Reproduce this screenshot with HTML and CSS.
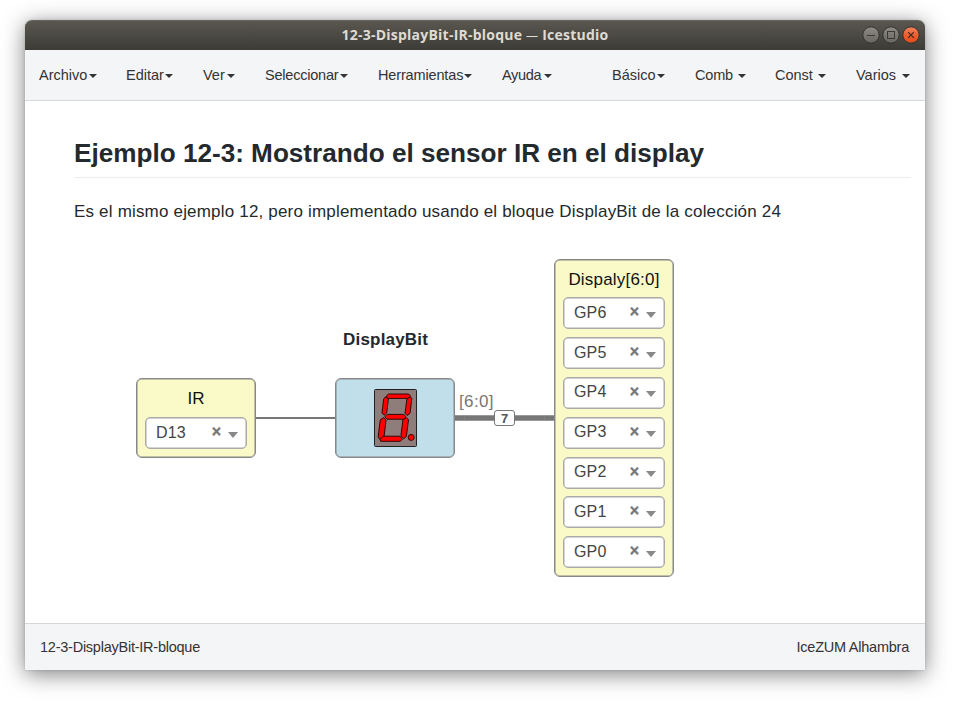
FILE: index.html
```html
<!DOCTYPE html>
<html lang="es">
<head>
<meta charset="utf-8">
<title>12-3-DisplayBit-IR-bloque — Icestudio</title>
<link rel="stylesheet" href="styles.css">
</head>
<body>
<div class="window">
  <header class="titlebar">
    <span class="title">12-3-DisplayBit-IR-bloque <span class="dash">—</span> Icestudio</span>
    <svg class="controls" width="60" height="20" viewBox="0 0 60 20">
      <defs>
        <linearGradient id="gray" x1="0" y1="0" x2="0" y2="1"><stop offset="0" stop-color="#8d8b84"/><stop offset="1" stop-color="#686660"/></linearGradient>
        <linearGradient id="orange" x1="0" y1="0" x2="0" y2="1"><stop offset="0" stop-color="#f58462"/><stop offset="0.5" stop-color="#ec5f30"/><stop offset="1" stop-color="#df4c19"/></linearGradient>
      </defs>
      <circle cx="10" cy="10" r="8.2" fill="url(#gray)" stroke="#33322e"/>
      <circle cx="30" cy="10" r="8.2" fill="url(#gray)" stroke="#33322e"/>
      <circle cx="50" cy="10" r="8.2" fill="url(#orange)" stroke="#33322e"/>
      <path d="M6 10.5h8" stroke="#3b3a35" fill="none"/>
      <rect x="26.5" y="6.5" width="7" height="7" stroke="#3b3a35" fill="none"/>
      <path d="M47.2 7.2l5.6 5.6M52.8 7.2l-5.6 5.6" stroke="#3b2a20" stroke-width="1.2" fill="none"/>
    </svg>
  </header>
  <nav class="menubar">
    <ul class="menu">
      <li class="w-archivo">Archivo<i class="caret"></i></li>
      <li class="w-editar">Editar<i class="caret"></i></li>
      <li class="w-ver">Ver<i class="caret"></i></li>
      <li class="w-sel">Seleccionar<i class="caret"></i></li>
      <li class="w-herr">Herramientas<i class="caret"></i></li>
      <li class="w-ayuda">Ayuda<i class="caret"></i></li>
    </ul>
    <ul class="menu">
      <li class="w-basico">Básico<i class="caret"></i></li>
      <li class="w-comb">Comb<i class="caret"></i></li>
      <li class="w-const">Const<i class="caret"></i></li>
      <li class="w-varios">Varios<i class="caret"></i></li>
    </ul>
  </nav>
  <main class="canvas">
    <article class="note">
      <h1>Ejemplo 12-3: Mostrando el sensor IR en el display</h1>
      <p>Es el mismo ejemplo 12, pero implementado usando el bloque DisplayBit de la colección 24</p>
    </article>
    <svg class="wires" width="900" height="522" viewBox="25 101 900 522">
      <path d="M255 418H336" stroke="#777" stroke-width="2"/>
      <path d="M454 418H555" stroke="#777" stroke-width="5.4"/>
      <path d="M464.5 415v6M544.5 415v6" stroke="#8a8a8a" stroke-width=".6"/>
    </svg>
    <span class="bus-size">7</span>
    <span class="port-label">[6:0]</span>
    <strong class="block-label">DisplayBit</strong>
    <section class="node input">
      <h2>IR</h2>
      <div class="select"><span>D13</span><b>×</b><i></i></div>
    </section>
    <section class="node generic">
      <svg width="43" height="58" viewBox="0 0 43 58">
        <rect x=".5" y=".5" width="42" height="57" rx="1" fill="#8e7d7b" stroke="#222"/>
        <g fill="#f00" stroke="#200" stroke-width=".9" stroke-linejoin="round">
          <path d="M12.3 7l2.2-2h20.2l1.8 2-2.2 2.4H14.1z"/>
          <path d="M11.4 7.8l3 2.2-1.7 14-2.6 2.3-2.2-2.3 1.8-14z"/>
          <path d="M36.4 7.8l1.4 1.7-1.8 14.8-2.9 2.2-2.1-2.3 1.9-14.2z"/>
          <path d="M10.8 27.8l2.4-2.4h16.6l2.2 2.4-2.4 2.4H13z"/>
          <path d="M9.6 28.6l2.5 2.3-2 16.3-4.1 3.4-1.9-2.6 2.2-17.2z"/>
          <path d="M32.4 28.6l2.1 2.2-2.1 16.6-2.9 2.4-2.6-2.7 2-16.2z"/>
          <path d="M6 50.4l3.1-3.2h16.7l2.6 3.1-2 2H6.7z"/>
          <circle cx="37.2" cy="48.4" r="3"/>
        </g>
      </svg>
    </section>
    <section class="node output">
      <h2>Dispaly[6:0]</h2>
      <div class="select"><span>GP6</span><b>×</b><i></i></div>
      <div class="select"><span>GP5</span><b>×</b><i></i></div>
      <div class="select"><span>GP4</span><b>×</b><i></i></div>
      <div class="select"><span>GP3</span><b>×</b><i></i></div>
      <div class="select"><span>GP2</span><b>×</b><i></i></div>
      <div class="select"><span>GP1</span><b>×</b><i></i></div>
      <div class="select"><span>GP0</span><b>×</b><i></i></div>
    </section>
  </main>
  <footer class="statusbar">
    <span>12-3-DisplayBit-IR-bloque</span>
    <span class="board">IceZUM Alhambra</span>
  </footer>
</div>
</body>
</html>
```
FILE: styles.css
```css
* { box-sizing: border-box; }
body {
  margin: 0;
  padding: 20px 35px 45px 25px;
  height: 715px;
  overflow: hidden;
  background: #fff;
  color: #24292e;
  font-family: "Liberation Sans", Arial, sans-serif;
}
.window {
  display: flex;
  flex-direction: column;
  width: 900px;
  height: 650px;
  border-radius: 7px 7px 0 0;
  background: #fff;
  box-shadow: 0 4px 22px rgba(0, 0, 0, .5), 0 0 3px rgba(0, 0, 0, .15);
}
.titlebar {
  position: relative;
  display: flex;
  align-items: center;
  justify-content: center;
  height: 30px;
  padding-bottom: 1px;
  border-radius: 7px 7px 0 0;
  border-top: 1px solid #66655c;
  background: linear-gradient(#59574f, #3d3b37);
}
.title {
  color: #dfdbd2;
  font: bold 14px/26px "Open Sans", "Noto Sans", sans-serif;
  letter-spacing: .23px;
  white-space: nowrap;
}
.dash { font-weight: 400; font-size: 12px; }
.controls { position: absolute; right: 4px; top: 4px; }
.menubar {
  display: flex;
  justify-content: space-between;
  height: 51px;
  padding: 0 15px 0 14px;
  background: #f4f5f7;
  border-bottom: 1px solid #d3dadd;
  color: #333;
  font-size: 14.5px;
  line-height: 50px;
}
.menu { display: flex; gap: 30px; margin: 0; padding: 0; list-style: none; }
.menu li { display: flex; align-items: center; justify-content: space-between; white-space: nowrap; }
.caret { flex: none; margin-top: 1px; border: 4px solid transparent; border-top-color: #333; border-bottom: 0; }
.w-archivo { width: 58px; margin-right: -1px; }
.w-editar { width: 47px; }
.w-ver { width: 32px; }
.w-sel { width: 83px; letter-spacing: -.22px; }
.w-herr { width: 94px; letter-spacing: -.15px; }
.w-ayuda { width: 50px; letter-spacing: -.3px; }
.w-basico { width: 53px; }
.w-comb { width: 51px; margin-right: -1px; letter-spacing: -.2px; }
.w-const { width: 51px; }
.w-varios { width: 54px; }
.canvas { position: relative; flex: 1; min-height: 0; }
.note { padding: 36px 14px 0 49px; }
.note h1 {
  margin: 0 0 21px;
  height: 41px;
  border-bottom: 1px solid #eaecef;
  font-size: 26.13px;
  line-height: 32px;
  white-space: nowrap;
}
.note p { margin: 0; font-size: 17px; letter-spacing: .185px; line-height: 26px; white-space: nowrap; }
.wires { position: absolute; left: 0; top: 0; }
.node {
  position: absolute;
  width: 120px;
  border: 1px solid #888;
  border-radius: 6px;
  background: #fafac8;
  box-shadow: inset 0 0 0 .5px #888;
}
.node h2 {
  margin: 0;
  padding-top: 1px;
  color: #111;
  font-size: 17px;
  font-weight: normal;
  line-height: 37px;
  text-align: center;
  white-space: nowrap;
}
.input { left: 111px; top: 277px; height: 80px; }
.generic { left: 310px; top: 277px; height: 80px; display: flex; align-items: center; justify-content: center; background: #c0dfeb; }
.output { left: 529px; top: 158px; height: 318px; }
.output h2 { letter-spacing: .2px; line-height: 38px; height: 37.4px; }
.select {
  display: flex;
  align-items: center;
  width: 102px;
  height: 32px;
  margin: 0 0 7.8px 8px;
  padding: 0 8px 0 10px;
  border: 1px solid #aaa;
  border-radius: 5px;
  box-shadow: inset 0 0 0 .5px #aaa;
  background: #fff;
  color: #444;
  font-size: 16px;
}
.select span { flex: 1; margin-top: -1px; letter-spacing: .15px; }
.select b { color: #777; font-size: 16px; line-height: 28px; margin: -2px 7px 0 0; -webkit-text-stroke: .4px #777; }
.select i { border: 5px solid transparent; border-top: 6px solid #888; border-bottom: 0; margin-top: 3px; }
.block-label { position: absolute; left: 318px; top: 229px; font-size: 17px; letter-spacing: .2px; line-height: 20px; }
.port-label { position: absolute; left: 434px; top: 291px; color: #777; font-size: 17px; letter-spacing: .35px; line-height: 20px; }
.bus-size {
  position: absolute;
  left: 469px;
  top: 309px;
  width: 21px;
  height: 16px;
  border: 1px solid #777;
  border-radius: 3px;
  background: #fff;
  color: #555;
  font-size: 13px;
  font-weight: bold;
  line-height: 15px;
  text-align: center;
}
.statusbar {
  display: flex;
  justify-content: space-between;
  height: 47px;
  padding: 0 16px 0 15px;
  border-top: 1px solid #d3d7da;
  background: #f4f5f7;
  color: #333;
  font-size: 14.5px;
  letter-spacing: -.24px;
  line-height: 46px;
}
```
